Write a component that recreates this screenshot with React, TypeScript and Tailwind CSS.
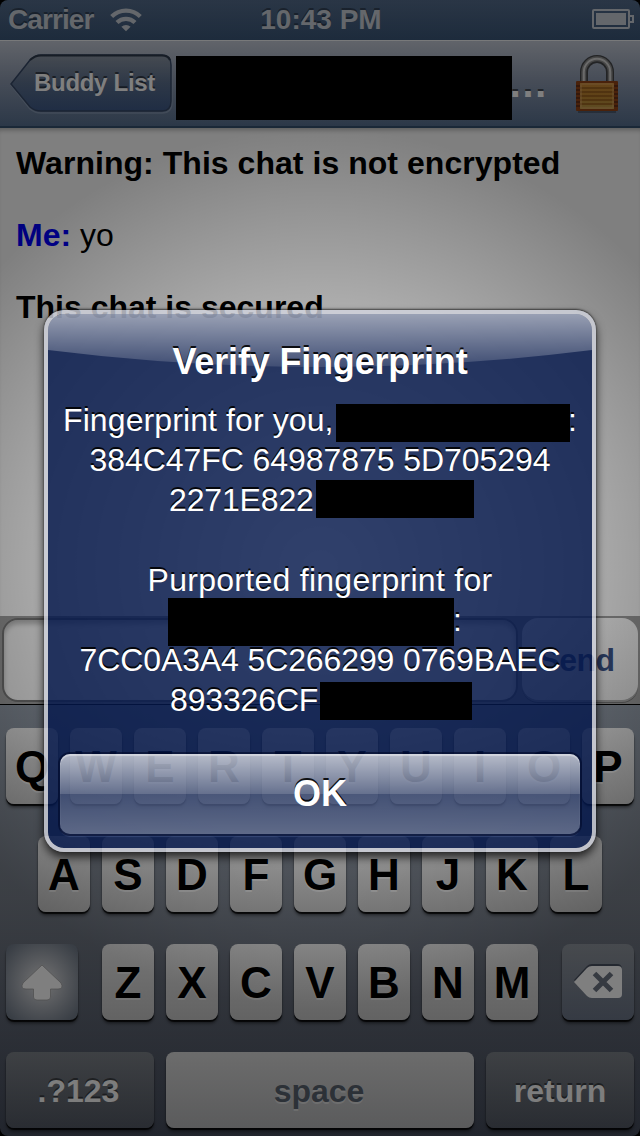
import React from "react";

const FONT = "font-['Liberation_Sans',Arial,sans-serif]";

function StatusBar() {
  return (
    <div className="flex h-10 items-center justify-between bg-linear-to-b from-[#546c8c] to-[#3a5678] pl-2 pr-[6px] text-[28px] font-bold leading-10 text-[#c8ced6] [text-shadow:0_-2px_0_rgba(0,0,0,0.35)]">
      <div className="flex w-[240px] items-center gap-4">
        <span className="tracking-[-0.9px]">Carrier</span>
        <svg width="32" height="24" viewBox="0 0 32 24" fill="none" stroke="#c8ced6" strokeWidth="4.2">
          <path d="M1.7 8.6a20.2 20.2 0 0 1 28.6 0" />
          <path d="M7 14.5a12.8 12.8 0 0 1 18 0" />
          <path d="M16 23.2l-4.6-4.4a6.6 6.6 0 0 1 9.2 0z" fill="#c8ced6" stroke="none" />
        </svg>
      </div>
      <span className="w-[140px] text-center">10:43 PM</span>
      <div className="flex w-[240px] justify-end">
        <svg width="42" height="20" viewBox="0 0 42 20" className="-mt-[2px]">
          <rect x="1" y="1" width="36" height="18" rx="1" fill="none" stroke="#c8ced6" strokeWidth="2" />
          <rect x="4" y="4" width="30" height="12" fill="#c8ced6" />
          <path d="M38 7h3v6h-3" fill="none" stroke="#c8ced6" strokeWidth="2" />
        </svg>
      </div>
    </div>
  );
}

function Lock() {
  return (
    <svg width="44" height="58" viewBox="0 0 44 58">
      <defs>
        <linearGradient id="brass" x1="0" x2="0" y1="0" y2="1">
          <stop offset="0" stopColor="#cc8a34" />
          <stop offset=".5" stopColor="#be842e" />
          <stop offset="1" stopColor="#bc9a48" />
        </linearGradient>
      </defs>
      <path d="M8 27V17a13 13 0 0 1 26 0V27" fill="none" stroke="#45474a" strokeWidth="8" />
      <path d="M7.800 27V17a13.200 13.200 0 0 1 26.400 0V27" fill="none" stroke="#8c8c8c" strokeWidth="5" />
      <path d="M7.800 27V17a13.200 13.200 0 0 1 26.400 0V27" fill="none" stroke="#d4d4d4" strokeWidth="2" />
      <rect x="0" y="26" width="42" height="30" rx="1" fill="#944416" />
      <path d="M0 31h42M0 35h42M0 39h42M0 43h42M0 47h42M0 51h42" stroke="#5c2a16" strokeWidth="1.500" />
      <rect x="4" y="28" width="34" height="26" fill="url(#brass)" />
      <path d="M4 33h34M4 37h34M4 41h34M4 45h34M4 49h34" stroke="#965e1c" strokeWidth="1.500" />
      <rect x="5" y="29" width="32" height="24" rx="1" fill="none" stroke="#e0a868" strokeOpacity=".45" strokeWidth="2" />
      <path d="M2 57h38" stroke="#000" strokeOpacity=".35" strokeWidth="1.500" />
    </svg>
  );
}

function NavBar() {
  return (
    <div className="flex h-[88px] items-start border-b-2 border-[#34506f] border-t border-t-[#f0f2f5] bg-linear-to-b from-[#c2c8d4] via-[#8f9bb0] via-45% to-[#587090]">
      <div className="relative ml-2 mt-[13px] h-[62px] w-[168px]">
        <svg className="absolute inset-0" width="168" height="62" viewBox="0 0 168 62">
          <defs>
            <linearGradient id="back" x1="0" x2="0" y1="0" y2="1">
              <stop offset="0" stopColor="#8c96a4" />
              <stop offset=".5" stopColor="#5c708e" />
              <stop offset="1" stopColor="#3e5a88" />
            </linearGradient>
          </defs>
          <path d="M3 31L22 7Q27 2 33 2H154Q164 2 164 12V48Q164 59 154 59H33Q27 59 22 55Z" fill="none" stroke="#a0b0c8" strokeOpacity=".5" strokeWidth="1.500" />
          <path d="M3 30L22 6Q27 1 33 1H154Q163 1 163 11V47Q163 57 154 57H33Q27 57 22 53Z" fill="url(#back)" stroke="#364866" strokeWidth="1.500" />
          <path d="M22 6Q27 1.500 33 1.500H154Q160 1.500 162 6" fill="none" stroke="#2e3a4c" strokeWidth="2" />
        </svg>
        <span className="relative ml-[26px] block whitespace-nowrap text-[24px] font-bold leading-[58px] tracking-[-0.3px] text-white [text-shadow:0_-2px_0_rgba(0,0,0,0.5)]">
          Buddy List
        </span>
      </div>
      <div className="z-10 mt-[15px] h-16 w-[336px] bg-black" />
      <span className="-ml-1 mt-[13px] w-[68px] text-[40px] font-bold leading-[58px] text-white [text-shadow:0_-2px_0_rgba(0,0,0,0.5)]">…</span>
      <div className="mt-[14px]">
        <Lock />
      </div>
    </div>
  );
}

function Chat() {
  return (
    <div className="flex h-[488px] flex-col gap-9 bg-white px-4 pt-[17px] text-[32px] leading-9 text-black shadow-[inset_0_5px_5px_-3px_rgba(0,0,0,0.3)]">
      <p className="font-bold tracking-[0.04px]">Warning: This chat is not encrypted</p>
      <p>
        <b className="text-[#0000ff]">Me:</b> yo
      </p>
      <p className="font-bold">This chat is secured</p>
    </div>
  );
}

function Composer() {
  return (
    <div className="flex h-[88px] gap-1 bg-[#a0a0a0] px-[2px] pt-[2px]">
      <div className="h-[84px] w-[516px] rounded-[16px] border-2 border-[#777] bg-[#fafafa] shadow-[inset_0_4px_5px_rgba(0,0,0,0.25)]" />
      <div className="h-[82px] w-[116px] rounded-[16px] bg-linear-to-b from-[#fff] to-[#eee] pr-[7px] text-center text-[32px] font-bold leading-[84px] tracking-[-0.5px] text-[#3c5488] shadow-[0_2px_0_#aaa,0_3px_0_#777]">
        Send
      </div>
    </div>
  );
}

const KEY_SHADOW = "shadow-[0_2px_1px_rgba(0,0,0,0.85),0_4px_3px_rgba(0,0,0,0.35)]";

function Letters({ keys }: { keys: string }) {
  return (
    <>
      {keys.split("").map((k) => (
        <div
          key={k}
          className={`h-[76px] w-[52px] rounded-[8px] bg-linear-to-b from-[#eaeaea] to-[#c6c6c6] text-center text-[44px] font-bold leading-[78px] text-black [text-shadow:0_2px_0_rgba(255,255,255,0.5)] ${KEY_SHADOW}`}
        >
          {k}
        </div>
      ))}
    </>
  );
}

const DARK_KEY = `h-[76px] rounded-[8px] bg-linear-to-b from-[#7c8188] to-[#535964] text-center text-[32px] font-bold leading-[78px] text-[#fafafa] [text-shadow:0_-2px_0_rgba(0,0,0,0.45)] ${KEY_SHADOW}`;

function Keyboard() {
  return (
    <div className="flex h-[432px] flex-col gap-8 border-t border-black bg-linear-to-b from-[#8d96a2] via-[#767d88] via-45% to-[#434a5a] px-[6px] pt-[23px]">
      <div className="flex gap-3">
        <Letters keys="QWERTYUIOP" />
      </div>
      <div className="flex justify-center gap-3">
        <Letters keys="ASDFGHJKL" />
      </div>
      <div className="flex justify-between">
        <div className={`flex h-[76px] w-[72px] items-center justify-center rounded-[8px] bg-[#707a88] bg-radial from-[#d4d5d8] from-15% to-[#727c8a] to-90% ${KEY_SHADOW}`}>
          <svg width="42" height="38" viewBox="0 0 42 38">
            <path d="M21 2L40 20Q43 26 37 26H29.500V34Q29.500 37 26 37H16Q12.500 37 12.500 34V26H5Q-1 26 2 20Z" fill="#fff" stroke="#999" strokeWidth=".7" />
          </svg>
        </div>
        <div className="flex gap-3">
          <Letters keys="ZXCVBNM" />
        </div>
        <div className={`flex h-[76px] w-[72px] items-center justify-center rounded-[8px] bg-linear-to-b from-[#8e949c] to-[#6b7587] ${KEY_SHADOW}`}>
          <svg width="50" height="36" viewBox="0 0 50 36">
            <path d="M1 17L14 3Q16 1 19 1H44Q49 1 49 6V29Q49 33 44 33H19Q16 33 14 31Z" transform="translate(0 -1)" fill="#495160" />
            <path d="M1 18L14 4Q16 2 19 2H45Q49 2 49 6V30Q49 34 45 34H19Q16 34 14 32Z" fill="#fff" />
            <path d="M21.500 9.500L38.500 26.500M38.500 9.500L21.500 26.500" stroke="#6c7482" strokeWidth="5" />
          </svg>
        </div>
      </div>
      <div className="flex justify-between">
        <div className={`w-[148px] ${DARK_KEY}`}>
          <span className="-ml-[3px]">.?123</span>
        </div>
        <div className={`h-[76px] w-[308px] rounded-[8px] bg-linear-to-b from-[#d8d8d8] to-[#b6b7b9] text-center text-[32px] font-bold leading-[78px] text-[#58626f] [text-shadow:0_2px_0_rgba(255,255,255,0.45)] ${KEY_SHADOW}`}>
          <span className="-ml-[2px]">space</span>
        </div>
        <div className={`w-[148px] ${DARK_KEY}`}>return</div>
      </div>
    </div>
  );
}

function Alert() {
  return (
    <div className="absolute left-[44px] top-[310px] h-[542px] w-[552px] rounded-[20px] border-4 border-[#d2d4df]/80 bg-[#04184c]/81 bg-clip-padding text-white shadow-[0_-1px_2px_rgba(0,0,0,0.6),0_5px_10px_rgba(0,0,0,0.75)]">
      <svg className="absolute left-0 top-0" width="544" height="60" viewBox="0 0 544 60">
        <defs>
          <linearGradient id="gloss" gradientUnits="userSpaceOnUse" x1="0" x2="0" y1="0" y2="53">
            <stop offset="0" stopColor="#fff" stopOpacity=".54" />
            <stop offset="1" stopColor="#fff" stopOpacity=".12" />
          </linearGradient>
        </defs>
        <path d="M0 16A16 16 0 0 1 16 0H528A16 16 0 0 1 544 16V36Q272 70 0 36Z" fill="url(#gloss)" />
      </svg>
      <div className="relative flex h-full flex-col px-3 text-[32px] leading-10 [text-shadow:0_-2px_0_rgba(0,0,0,0.9)]">
        <h1 className="mt-[28px] text-center text-[36px] font-bold leading-10 tracking-[-0.17px]">Verify Fingerprint</h1>
        <div className="mt-[18px] flex flex-col whitespace-nowrap">
          <div className="flex h-10 pl-[3px]">
            <span className="w-[273px] tracking-[0.1px]">Fingerprint for you,</span>
            <div className="mt-1 h-[38px] w-[234px] bg-black" />
            <span className="-ml-[2px]">:</span>
          </div>
          <div className="h-10 text-center tracking-[-0.06px]">384C47FC 64987875 5D705294</div>
          <div className="flex h-10 pl-[109px]">
            <span className="w-[147px] tracking-[-0.15px]">2271E822</span>
            <div className="h-[38px] w-[158px] bg-black" />
          </div>
          <div className="mt-10 h-10 text-center tracking-[0.28px]">Purported fingerprint for</div>
          <div className="flex h-10 pl-[108px]">
            <div className="-mt-[2px] h-12 w-[286px] bg-black" />
            <span className="-ml-[1px]">:</span>
          </div>
          <div className="h-10 text-center tracking-[-0.12px]">7CC0A3A4 5C266299 0769BAEC</div>
          <div className="flex h-10 pl-[110px]">
            <span className="w-[150px] tracking-[-0.15px]">893326CF</span>
            <div className="mt-[2px] h-[38px] w-[152px] bg-black" />
          </div>
        </div>
        <button className="mt-[34px] h-20 w-[520px] rounded-[10px] bg-[linear-gradient(to_bottom,rgba(255,255,255,0.68),rgba(255,255,255,0.32)_50%,rgba(255,255,255,0.2)_50%,rgba(255,255,255,0.32))] text-center text-[36px] font-bold leading-[80px] shadow-[inset_0_2px_1px_rgba(255,255,255,0.4),0_0_0_2px_rgba(0,8,40,0.6),0_3px_1px_rgba(90,110,160,0.4)] [text-shadow:0_-2px_0_rgba(0,0,0,0.9)]">
          OK
        </button>
      </div>
    </div>
  );
}

export default function App() {
  return (
    <div className={`relative h-[1136px] w-[640px] overflow-hidden bg-black ${FONT}`}>
      <div className="overflow-hidden rounded-[8px]">
        <StatusBar />
        <NavBar />
        <Chat />
        <Composer />
        <Keyboard />
      </div>
      <div className="absolute inset-0 bg-[radial-gradient(circle_440px_at_320px_568px,rgba(0,0,0,0.06),rgba(0,0,0,0.5))]" />
      <Alert />
    </div>
  );
}
